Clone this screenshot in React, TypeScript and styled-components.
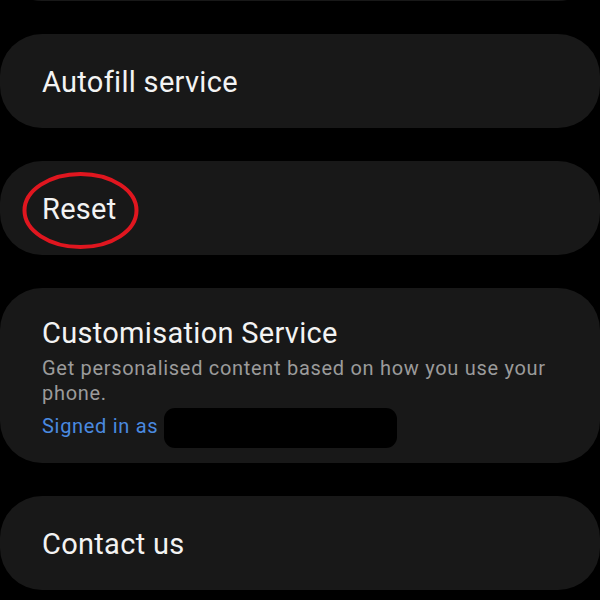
import styled, { createGlobalStyle } from 'styled-components';

const GlobalStyle = createGlobalStyle`
	html,
	body {
		margin: 0;
		padding: 0;
		background: #000;
	}
	body {
		font-family: Roboto, 'Noto Sans', 'Liberation Sans', sans-serif;
		-webkit-font-smoothing: antialiased;
	}
`;

const Screen = styled.div`
	width: 600px;
	height: 600px;
	overflow: hidden;
	background: #000;
`;

const SettingsList = styled.div`
	display: flex;
	flex-direction: column;
	gap: 33px;
	/* list is scrolled: the previous card sits just above the viewport */
	margin-top: -93px;
`;

const Card = styled.div`
	position: relative;
	box-sizing: border-box;
	background: #181818;
	border-radius: 42px;
	padding: 0 42px;
`;

const SimpleCard = styled(Card)`
	height: 94px;
	display: flex;
	align-items: center;
	padding-top: 2px;
`;

const DetailCard = styled(Card)`
	padding-top: 27px;
	padding-bottom: 15px;
`;

const Title = styled.div`
	color: #f3f3f3;
	font-size: 29px;
	line-height: 36px;
	letter-spacing: 0.3px;
`;

const Summary = styled.div`
	margin-top: 5px;
	color: #9b9b9b;
	font-size: 20px;
	line-height: 25px;
	letter-spacing: 0.7px;
`;

const AccountRow = styled.div`
	display: flex;
	align-items: center;
	margin-top: 2px;
`;

const AccountLabel = styled.span`
	color: #4a8ae0;
	font-size: 20px;
	line-height: 25px;
	letter-spacing: 0.7px;
	margin-bottom: 4px;
`;

const Redacted = styled.div`
	width: 233px;
	height: 40px;
	margin-left: 6px;
	background: #000;
	border-radius: 11px;
`;

const Highlight = styled.svg`
	position: absolute;
	left: 21px;
	top: 10px;
	width: 119px;
	height: 79px;
	pointer-events: none;
`;

function App() {
	return (
		<Screen>
			<GlobalStyle />
			<SettingsList>
				<SimpleCard />
				<SimpleCard>
					<Title>Autofill service</Title>
				</SimpleCard>
				<SimpleCard>
					<Title>Reset</Title>
					<Highlight viewBox="0 0 119 79">
						<ellipse
							cx="59.5"
							cy="39.5"
							rx="56"
							ry="36.5"
							fill="none"
							stroke="#e0161f"
							strokeWidth="4"
						/>
					</Highlight>
				</SimpleCard>
				<DetailCard>
					<Title>Customisation Service</Title>
					<Summary>
						Get personalised content based on how you use your phone.
					</Summary>
					<AccountRow>
						<AccountLabel>Signed in as</AccountLabel>
						<Redacted />
					</AccountRow>
				</DetailCard>
				<SimpleCard>
					<Title>Contact us</Title>
				</SimpleCard>
			</SettingsList>
		</Screen>
	);
}

export default App;
